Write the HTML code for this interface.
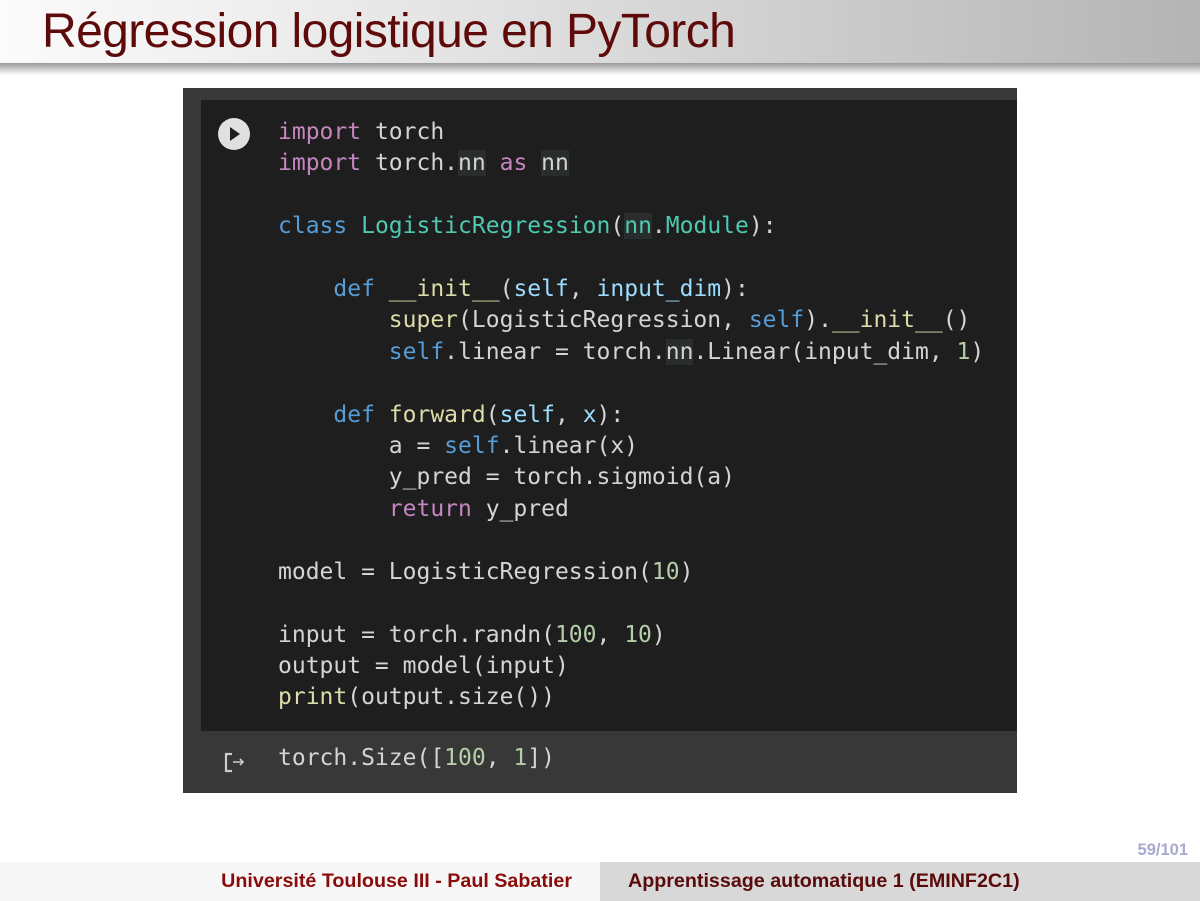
<!DOCTYPE html>
<html><head><meta charset="utf-8"><style>
body{margin:0;width:1200px;height:901px;background:#fff;position:relative;overflow:hidden;font-family:"Liberation Sans",sans-serif}
#hdr{position:absolute;left:0;top:0;width:1200px;height:63px;background:linear-gradient(to right,#fbfbfb 0%,#e6e6e6 35%,#b4b4b4 100%)}
#sh{position:absolute;left:0;top:63px;width:1200px;height:12px;background:linear-gradient(to bottom,#999,#fff)}
#title{position:absolute;left:42px;top:4px;font-size:48px;color:#5e0a0a;white-space:nowrap;letter-spacing:-0.6px}
#box{position:absolute;left:183px;top:88px;width:834px;height:705px;background:#383838}
#cell{position:absolute;left:18px;top:12px;width:816px;height:631px;background:#1e1e1e}
pre{margin:0;font-family:"DejaVu Sans Mono","Liberation Mono",monospace;font-size:23px;line-height:31.4px;color:#d4d4d4;position:absolute;left:95px;top:29px}
.k{color:#c586c0}.b{color:#569cd6}.c{color:#4ec9b0}.f{color:#dcdcaa}.n{color:#b5cea8}.p{color:#9cdcfe}.h{background:#2a2d2e}
#run{position:absolute;left:35px;top:30px;width:32px;height:32px;border-radius:50%;background:#e0e0e0}
#run:after{content:"";position:absolute;left:12px;top:9px;border-left:10px solid #1e1e1e;border-top:7px solid transparent;border-bottom:7px solid transparent}
#out{position:absolute;left:95px;top:655px;font-family:"DejaVu Sans Mono","Liberation Mono",monospace;font-size:23px;color:#d4d4d4;line-height:31px}
#foot1{position:absolute;left:0;top:862px;width:600px;height:39px;background:#f7f7f7;color:#8b0a0a;font-weight:bold;font-size:19.7px;text-align:right;box-sizing:border-box;padding-right:28px;line-height:39px}
#foot2{position:absolute;left:600px;top:862px;width:600px;height:39px;background:#d8d8d8;color:#5a0a0a;font-weight:bold;font-size:19.7px;box-sizing:border-box;padding-left:28px;line-height:39px}
#pg{position:absolute;right:12px;top:841px;color:#a9a9d0;font-weight:bold;font-size:16.5px}
</style></head><body>
<div id="hdr"></div><div id="sh"></div>
<div id="title">Régression logistique en PyTorch</div>
<div id="box"><div id="cell"></div>
<div id="run"></div>
<pre><span class="k">import</span> torch
<span class="k">import</span> torch.<span class="h">nn</span> <span class="k">as</span> <span class="h">nn</span>

<span class="b">class</span> <span class="c">LogisticRegression</span>(<span class="h c">nn</span>.<span class="c">Module</span>):

    <span class="b">def</span> <span class="f">__init__</span>(<span class="p">self</span>, <span class="p">input_dim</span>):
        <span class="f">super</span>(LogisticRegression, <span class="b">self</span>).<span class="f">__init__</span>()
        <span class="b">self</span>.linear = torch.<span class="h">nn</span>.Linear(input_dim, <span class="n">1</span>)

    <span class="b">def</span> <span class="f">forward</span>(<span class="p">self</span>, <span class="p">x</span>):
        a = <span class="b">self</span>.linear(x)
        y_pred = torch.sigmoid(a)
        <span class="k">return</span> y_pred

model = LogisticRegression(<span class="n">10</span>)

input = torch.randn(<span class="n">100</span>, <span class="n">10</span>)
output = model(input)
<span class="f">print</span>(output.size())</pre>
<svg style="position:absolute;left:40px;top:663px" width="24" height="24" viewBox="0 0 24 24"><path d="M9 3H3v17h6M3 3" fill="none" stroke="#ccc" stroke-width="2.2"/><path d="M10 11h10M17 8l3 3-3 3" fill="none" stroke="#ccc" stroke-width="1.6"/></svg>
<div id="out">torch.Size([<span class="n">100</span>, <span class="n">1</span>])</div>
</div>
<div id="pg">59/101</div>
<div id="foot1">Université Toulouse III - Paul Sabatier</div>
<div id="foot2">Apprentissage automatique 1 (EMINF2C1)</div>
</body></html>
